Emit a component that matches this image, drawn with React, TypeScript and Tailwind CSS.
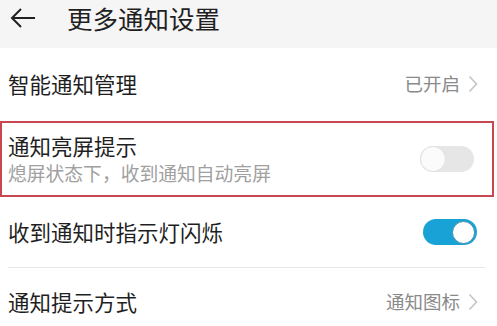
import React from 'react';

const font = { fontFamily: '"Noto Sans CJK SC", "Noto Sans", sans-serif' };

const Chevron: React.FC = () => (
  <svg width="10" height="18" viewBox="0 0 10 18" className="ml-[8px]">
    <path d="M1.5 1.5 L8.5 9 L1.5 16.5" fill="none" stroke="#c4c4c4" strokeWidth="1.6" />
  </svg>
);

const Toggle: React.FC<{ on: boolean }> = ({ on }) =>
  on ? (
    <div className="flex h-[26px] w-[54px] items-center justify-end rounded-full bg-[#18a2d6] pr-[2px]">
      <div className="h-[23px] w-[23px] rounded-full border-[1.5px] border-[#4b8fa8] bg-white" />
    </div>
  ) : (
    <div className="flex h-[26px] w-[54px] items-center rounded-full bg-[#e6e6e6]">
      <div className="h-[26px] w-[26px] rounded-full border border-[#e0e0e0] bg-[#fbfbfb]" />
    </div>
  );

export default function App() {
  return (
    <div className="h-[326px] w-[497px] overflow-hidden bg-white text-[#1f1f1f]" style={font}>
      <div className="flex h-[48px] items-start bg-[#f5f5f5] pt-[1px]">
        <svg width="28" height="22" viewBox="0 0 28 22" className="ml-[9px] mt-[6px]">
          <path d="M26 11 H3 M12 2 L3 11 L12 20" fill="none" stroke="#222" strokeWidth="2" />
        </svg>
        <span className="ml-[30px] text-[25.5px] leading-[33px]">更多通知设置</span>
      </div>

      <div className="flex h-[72px] items-center justify-between pl-[8px] pr-[19px]">
        <span className="text-[21.5px] leading-none">智能通知管理</span>
        <div className="flex items-center text-[18.5px] text-[#8a8a8a]">
          已开启
          <Chevron />
        </div>
      </div>

      <div className="mt-[1px] flex h-[76px] w-[494px] items-center justify-between border-2 border-[#c9474f] pl-[6px] pr-[18px]">
        <div className="flex flex-col">
          <span className="text-[21.5px] leading-[28px]">通知亮屏提示</span>
          <span className="text-[18.8px] leading-[26px] text-[#a0a0a0]">熄屏状态下，收到通知自动亮屏</span>
        </div>
        <Toggle on={false} />
      </div>

      <div className="flex h-[70px] items-center justify-between pl-[8px] pr-[20px]">
        <span className="text-[21.5px] leading-none">收到通知时指示灯闪烁</span>
        <Toggle on />
      </div>
      <div className="ml-[8px] h-px w-[477px] bg-[#e6e6e6]" />

      <div className="flex h-[68px] items-center justify-between pl-[8px] pr-[19px]">
        <span className="text-[21.5px] leading-none">通知提示方式</span>
        <div className="flex items-center text-[18.5px] text-[#8a8a8a]">
          通知图标
          <Chevron />
        </div>
      </div>
    </div>
  );
}
